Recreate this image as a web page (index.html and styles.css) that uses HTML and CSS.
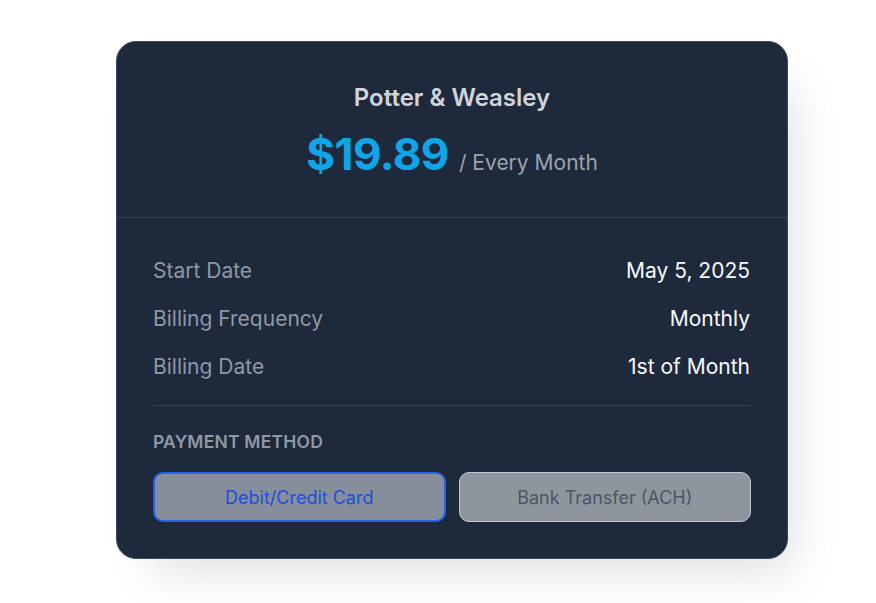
FILE: index.html
```html
<!DOCTYPE html>
<html lang="en">
<head>
<meta charset="utf-8">
<title>Subscription</title>
<link rel="stylesheet" href="styles.css">
</head>
<body>
<div class="card">
  <div class="card-header">
    <div class="title">Potter &amp; Weasley</div>
    <div class="price-line"><span class="price">$19.89</span><span class="period">/ Every Month</span></div>
  </div>
  <div class="card-body">
    <div class="rows">
      <div class="row"><span class="label">Start Date</span><span class="value">May 5, 2025</span></div>
      <div class="row"><span class="label">Billing Frequency</span><span class="value">Monthly</span></div>
      <div class="row"><span class="label">Billing Date</span><span class="value">1st of Month</span></div>
    </div>
    <div class="divider"></div>
    <div class="section-label">PAYMENT METHOD</div>
    <div class="methods">
      <button class="method active">Debit/Credit Card</button>
      <button class="method">Bank Transfer (ACH)</button>
    </div>
  </div>
</div>
</body>
</html>
```

FILE: styles.css
```css
* { box-sizing: border-box; }
html, body { margin: 0; padding: 0; background: #ffffff; }
body {
  font-family: Inter, "Noto Sans", "Liberation Sans", sans-serif;
  padding: 41px 0 44px 116px;
  min-height: 603px;
}
.card {
  width: 672px;
  height: 518px;
  background: #1e293b;
  border: 1px solid #3b4b61;
  border-radius: 20px;
  box-shadow: 20px 28px 50px -18px rgba(0, 0, 0, 0.14);
  overflow: hidden;
}
.card-header {
  height: 176px;
  border-bottom: 1px solid #334155;
  display: flex;
  flex-direction: column;
  align-items: center;
  padding-top: 41px;
}
.title {
  font-size: 24px;
  line-height: 30px;
  font-weight: 600;
  color: #d1d5db;
}
.price-line {
  margin-top: 14px;
  display: flex;
  align-items: baseline;
  gap: 10px;
}
.price {
  font-size: 44px;
  line-height: 54px;
  font-weight: 700;
  color: #0ea5e9;
  letter-spacing: -0.5px;
}
.period {
  font-size: 21px;
  color: #9ca3af;
}
.card-body {
  padding: 37px 37px 0 36px;
}
.rows {
  display: flex;
  flex-direction: column;
  gap: 16px;
}
.row {
  display: flex;
  justify-content: space-between;
  font-size: 21px;
  line-height: 32px;
}
.label { color: #8f98a6; }
.value { color: #f8fafc; }
.divider {
  height: 1px;
  background: #334155;
  margin-top: 22px;
  margin-right: -1px;
}
.section-label {
  margin-top: 24px;
  font-size: 17.5px;
  line-height: 24px;
  font-weight: 600;
  color: #8f98a6;
  letter-spacing: 0.2px;
}
.methods {
  margin-top: 18px;
  margin-right: -1px;
  display: grid;
  grid-template-columns: 1fr 1fr;
  gap: 13px;
}
.method {
  height: 50px;
  border-radius: 10px;
  font-family: inherit;
  font-size: 18px;
  background: #8f959e;
  border: 1px solid #c4c8ce;
  color: #4b5565;
}
.method.active {
  background: #868e9b;
  border: 2px solid #2563eb;
  color: #1d4ed8;
}
```
